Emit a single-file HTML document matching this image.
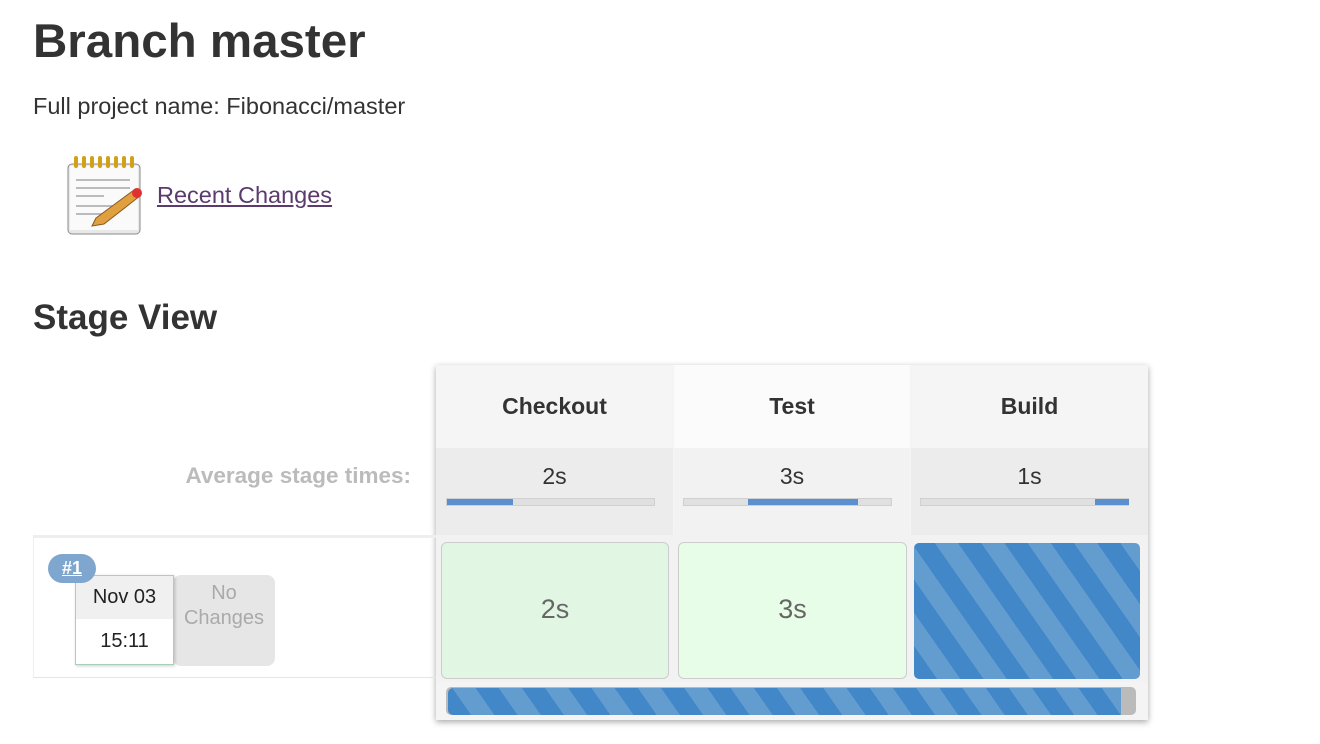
<!DOCTYPE html>
<html><head><style>
body{margin:0;width:1320px;height:744px;background:#fff;font-family:"Liberation Sans",sans-serif;color:#333;position:relative;overflow:hidden}
.a{position:absolute}
h1{position:absolute;left:33px;top:14px;margin:0;font-size:47.5px;font-weight:bold;color:#333}
h2{position:absolute;left:33px;top:298px;margin:0;font-size:35px;font-weight:bold;color:#333}
.stripe{background:repeating-linear-gradient(55deg,#4287c8 0 19px,#639dd0 19px 38px)}
.cell{position:absolute;text-align:center}
</style></head><body>
<h1>Branch master</h1>
<div class="a" style="left:33px;top:93px;font-size:23.5px;color:#333">Full project name: Fibonacci/master</div>
<svg class="a" style="left:64px;top:154px" width="82" height="82" viewBox="0 0 82 82">
<rect x="4" y="10" width="72" height="70" rx="4" fill="#e8e8e8" stroke="#888"/>
<rect x="6" y="12" width="68" height="64" fill="#fafafa"/>
<g fill="#d4a017"><rect x="10" y="2" width="4" height="12" rx="2"/><rect x="18" y="2" width="4" height="12" rx="2"/><rect x="26" y="2" width="4" height="12" rx="2"/><rect x="34" y="2" width="4" height="12" rx="2"/><rect x="42" y="2" width="4" height="12" rx="2"/><rect x="50" y="2" width="4" height="12" rx="2"/><rect x="58" y="2" width="4" height="12" rx="2"/><rect x="66" y="2" width="4" height="12" rx="2"/></g>
<g stroke="#bbb" stroke-width="2"><line x1="12" y1="26" x2="66" y2="26"/><line x1="12" y1="34" x2="66" y2="34"/><line x1="12" y1="42" x2="40" y2="42"/><line x1="12" y1="52" x2="50" y2="52"/><line x1="12" y1="60" x2="40" y2="60"/></g>
<path d="M32 64 L70 36 L76 42 L40 70 L28 72 Z" fill="#e0a040" stroke="#8a5a20"/>
<circle cx="73" cy="39" r="5" fill="#e03030"/>
</svg>
<div class="a" style="left:157px;top:182px;font-size:23.5px;color:#5b3a6e;text-decoration:underline">Recent Changes</div>
<h2>Stage View</h2>

<div class="a" style="left:436px;top:365px;width:712px;height:355px;box-shadow:0 2px 6px rgba(0,0,0,.35);background:#f4f4f4"></div>
<div class="cell" style="left:436px;top:365px;width:237px;height:83px;background:#f5f5f5;line-height:83px;font-weight:bold;font-size:23px">Checkout</div>
<div class="cell" style="left:674px;top:365px;width:236px;height:83px;background:#fbfbfb;line-height:83px;font-weight:bold;font-size:23px">Test</div>
<div class="cell" style="left:911px;top:365px;width:237px;height:83px;background:#f5f5f5;line-height:83px;font-weight:bold;font-size:23px">Build</div>

<div class="a" style="left:33px;top:448px;width:403px;height:87px;line-height:56px;text-align:right;font-weight:bold;font-size:22.5px;color:#bbb"><span style="margin-right:25px">Average stage times:</span></div>
<div class="cell" style="left:436px;top:448px;width:237px;height:87px;background:#ececec;font-size:23px;line-height:56px">2s</div>
<div class="cell" style="left:674px;top:448px;width:236px;height:87px;background:#f2f2f2;font-size:23px;line-height:56px">3s</div>
<div class="cell" style="left:911px;top:448px;width:237px;height:87px;background:#ececec;font-size:23px;line-height:56px">1s</div>
<div class="a" style="left:446px;top:498px;width:209px;height:8px;background:#e0e0e0;border:1px solid #d0d0d0;box-sizing:border-box"><div style="width:66px;height:6px;background:#5b8fd0"></div></div>
<div class="a" style="left:683px;top:498px;width:209px;height:8px;background:#e0e0e0;border:1px solid #d0d0d0;box-sizing:border-box"><div style="margin-left:64px;width:110px;height:6px;background:#5b8fd0"></div></div>
<div class="a" style="left:920px;top:498px;width:209px;height:8px;background:#e0e0e0;border:1px solid #d0d0d0;box-sizing:border-box"><div style="margin-left:174px;width:34px;height:6px;background:#5b8fd0"></div></div>

<div class="a" style="left:33px;top:535px;width:403px;height:3px;background:#eee"></div>
<div class="a" style="left:33px;top:538px;width:402px;height:139px;border-left:1px solid #eee;border-bottom:1px solid #e4e4e4"></div>
<div class="a" style="left:436px;top:535px;width:712px;height:147px;background:#f2f2f2"></div>
<div class="cell" style="left:441px;top:542px;width:228px;height:137px;background:#e1f6e3;border:1px solid #ccc;border-radius:6px;box-sizing:border-box;line-height:133px;font-size:27px;color:#666">2s</div>
<div class="cell" style="left:678px;top:542px;width:229px;height:137px;background:#e8fde8;border:1px solid #ccc;border-radius:6px;box-sizing:border-box;line-height:133px;font-size:27px;color:#666">3s</div>
<div class="a stripe" style="left:914px;top:543px;width:226px;height:136px;border-radius:5px"></div>
<div class="a" style="left:446px;top:687px;width:690px;height:28px;background:#bbb;border-radius:5px"></div>
<div class="a stripe" style="left:448px;top:688px;width:673px;height:27px;border-radius:5px 0 0 5px"></div>

<div class="a" style="left:173px;top:575px;width:102px;height:91px;background:#e6e6e6;border-radius:8px;text-align:center;color:#aaa;font-size:20px;line-height:25px;padding-top:6px;box-sizing:border-box;padding-left:0px">No<br>Changes</div>
<div class="a" style="left:75px;top:575px;width:99px;height:90px;border:1px solid #a8d0b8;box-sizing:border-box;background:#fff;box-shadow:1px 1px 3px rgba(0,0,0,.2)">
<div style="height:43px;background:#f0f0f0;text-align:center;line-height:43px;font-size:20px;color:#222">Nov 03</div>
<div style="text-align:center;line-height:44px;font-size:20px;color:#222">15:11</div></div>
<div class="a" style="left:48px;top:554px;width:48px;height:29px;background:#7fa6cf;border-radius:15px;text-align:center;line-height:29px;font-size:18px;font-weight:bold;color:#fff;text-decoration:underline">#1</div>
</body></html>
